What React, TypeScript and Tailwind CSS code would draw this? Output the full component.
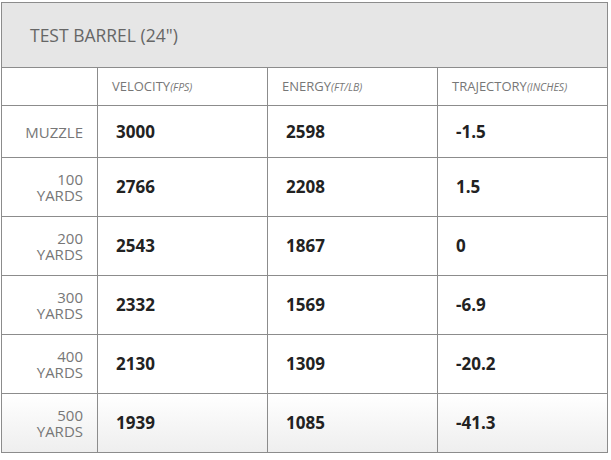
const rows = [
  { label: ['MUZZLE'], velocity: '3000', energy: '2598', trajectory: '-1.5' },
  { label: ['100', 'YARDS'], velocity: '2766', energy: '2208', trajectory: '1.5' },
  { label: ['200', 'YARDS'], velocity: '2543', energy: '1867', trajectory: '0' },
  { label: ['300', 'YARDS'], velocity: '2332', energy: '1569', trajectory: '-6.9' },
  { label: ['400', 'YARDS'], velocity: '2130', energy: '1309', trajectory: '-20.2' },
  { label: ['500', 'YARDS'], velocity: '1939', energy: '1085', trajectory: '-41.3' },
];

const columns = [
  { name: 'VELOCITY', unit: '(FPS)' },
  { name: 'ENERGY', unit: '(FT/LB)' },
  { name: 'TRAJECTORY', unit: '(INCHES)' },
];

export default function App() {
  return (
    <div className="min-h-[460px] w-[611px] bg-white pt-[2px] pl-[1px] font-['Open_Sans',sans-serif]">
      <table className="w-[607px] border-collapse border border-[#8c8c8c] table-fixed">
        <colgroup>
          <col className="w-[96px]" />
          <col className="w-[170px]" />
          <col className="w-[170px]" />
          <col className="w-[170px]" />
        </colgroup>
        <thead>
          {/* Title bar */}
          <tr className="h-[65px] bg-[#e6e6e6]">
            <th colSpan={4} className="border border-[#8c8c8c] pl-[28px] text-left text-[17.5px] font-normal text-[#666]">
              TEST BARREL (24")
            </th>
          </tr>
          {/* Column headers */}
          <tr className="h-[38px]">
            <th className="border border-[#8c8c8c]" />
            {columns.map((c) => (
              <th key={c.name} className="border border-[#8c8c8c] pl-[14px] text-left text-[13px] font-normal text-[#777]">
                {c.name}
                <span className="text-[10.5px] italic">{c.unit}</span>
              </th>
            ))}
          </tr>
        </thead>
        <tbody>
          {rows.map((r, i) => (
            <tr
              key={i}
              className={
                (i === 0 ? 'h-[52px] ' : 'h-[59px] ') +
                (i === rows.length - 1 ? 'bg-gradient-to-b from-white to-[#eeeeee]' : '')
              }
            >
              <td className="border border-[#8c8c8c] pr-[14px] text-right text-[15px] leading-[16px] text-[#777]">
                {r.label.map((l) => (
                  <div key={l}>{l}</div>
                ))}
              </td>
              <td className="border border-[#8c8c8c] pl-[18px] text-[17px] font-bold text-[#222]">{r.velocity}</td>
              <td className="border border-[#8c8c8c] pl-[18px] text-[17px] font-bold text-[#222]">{r.energy}</td>
              <td className="border border-[#8c8c8c] pl-[18px] text-[17px] font-bold text-[#222]">{r.trajectory}</td>
            </tr>
          ))}
        </tbody>
      </table>
    </div>
  );
}
